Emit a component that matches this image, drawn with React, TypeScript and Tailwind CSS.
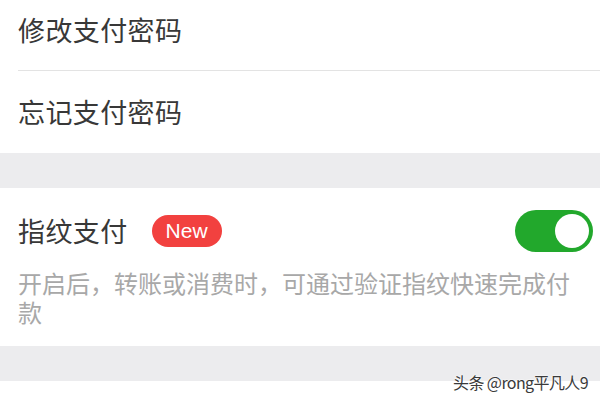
import React from 'react'

const cjk = { fontFamily: '"Noto Sans CJK SC", "Noto Sans", sans-serif' }

function Toggle({ on }: { on: boolean }) {
    return (
        <div className={`relative w-[78px] h-[42px] rounded-full ${on ? 'bg-[#22a82c]' : 'bg-[#e5e5e5]'}`}>
            <div className="absolute top-[4px] right-[4px] w-[34px] h-[34px] rounded-full bg-white" />
        </div>
    )
}

export default function App() {
    return (
        <div className="relative w-[600px] h-[400px] overflow-hidden bg-white" style={cjk}>
            <div className="bg-white">
                <div className="h-[70px] pb-[10px] pl-[18px] flex items-center text-[27px] tracking-[0.4px] text-[#383838]">
                    修改支付密码
                </div>
                <div className="ml-[18px] h-px bg-[#e3e3e3]" />
                <div className="h-[82px] pl-[18px] flex items-center text-[27px] tracking-[0.4px] text-[#383838]">
                    忘记支付密码
                </div>
            </div>

            <div className="h-[35px] bg-[#ececee]" />

            <div className="bg-white px-[18px] pt-[22px] pb-[20px]">
                <div className="flex items-center justify-between h-[42px]">
                    <div className="flex items-center">
                        <span className="text-[27px] tracking-[0.4px] text-[#383838]">指纹支付</span>
                        <span className="ml-[24px] h-[32px] px-[14px] rounded-full bg-[#f2413f] text-white text-[21px] leading-[32px]"
                            style={{ fontFamily: '"Liberation Sans", Arial, sans-serif' }}>
                            New
                        </span>
                    </div>
                    <div className="-mr-[11px]">
                        <Toggle on />
                    </div>
                </div>
                <p className="mt-[16px] text-[24px] leading-[29px] text-[#a8a8a8]">
                    开启后，转账或消费时，可通过验证指纹快速完成付款
                </p>
            </div>

            <div className="h-[35px] bg-[#ececee]" />
            <div className="h-[18px] bg-white" />

            <div className="absolute right-[12px] bottom-[10px] text-[16px] tracking-[-0.6px] leading-none text-[#3a3a3a] [text-shadow:0_0_2px_#fff,0_0_2px_#fff]">
                头条 @rong平凡人9
            </div>
        </div>
    )
}
